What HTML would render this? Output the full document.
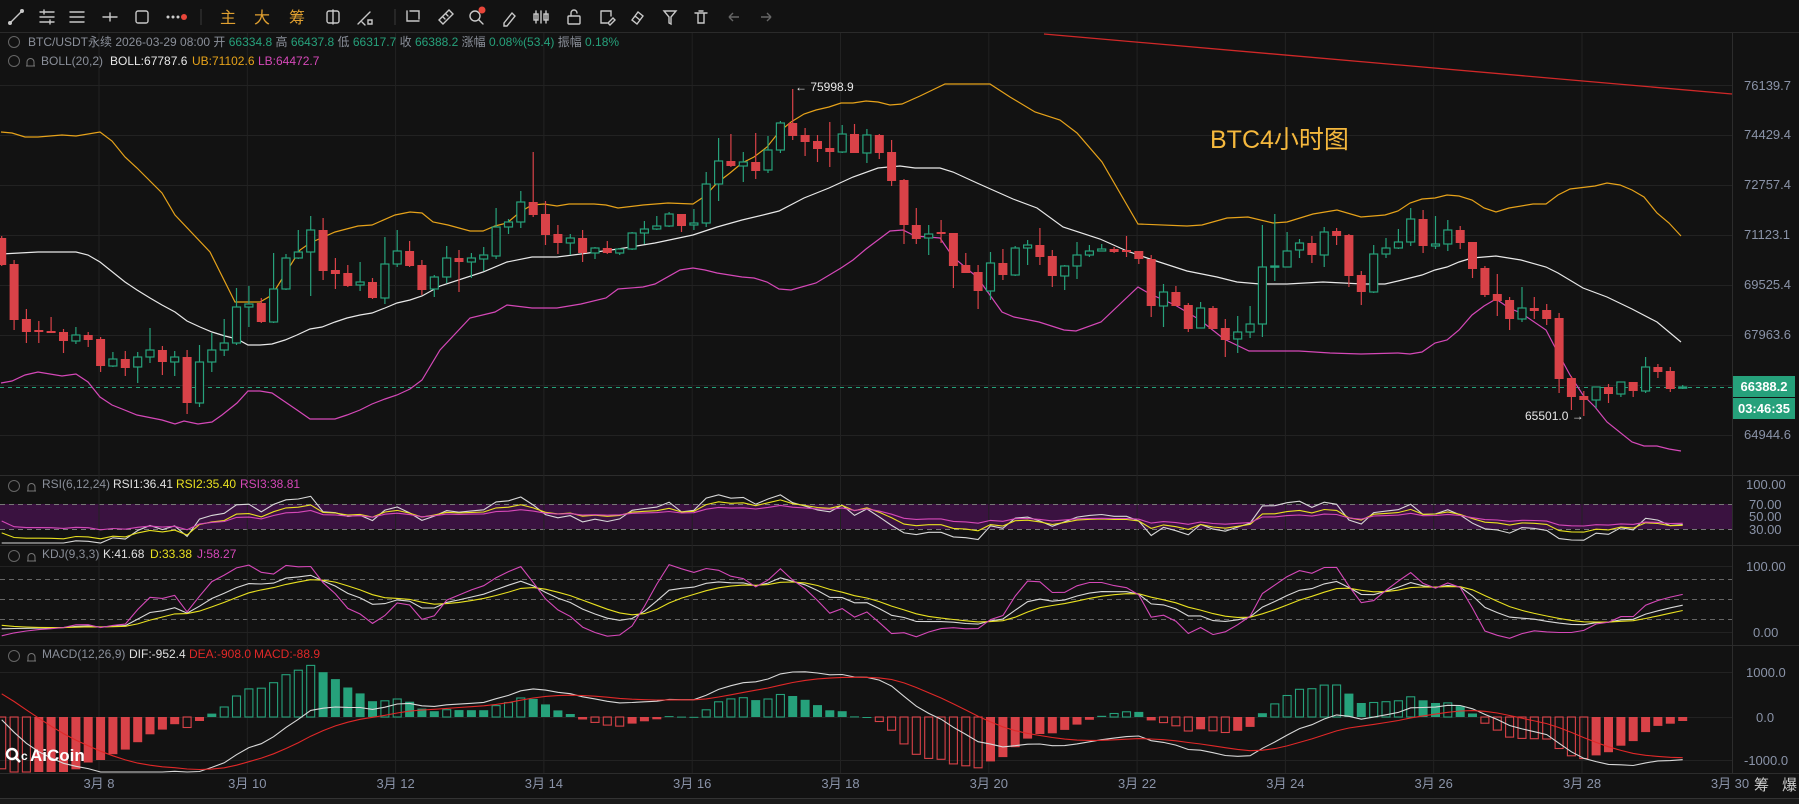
<!DOCTYPE html>
<html><head><meta charset="utf-8">
<style>
html,body{margin:0;padding:0;background:#121212;width:1799px;height:804px;overflow:hidden}
svg{position:absolute;left:0;top:0;font-family:"Liberation Sans","Noto Sans CJK SC",sans-serif}
</style></head>
<body>
<svg id="s" width="1799" height="804" viewBox="0 0 1799 804" xmlns="http://www.w3.org/2000/svg">
<rect width="1799" height="804" fill="#121212"/>
<g stroke="#c8c8c8" stroke-width="1.4" fill="none" stroke-linecap="round">
<line x1="10" y1="23" x2="22" y2="11"/><circle cx="10" cy="23" r="1.3" fill="#c8c8c8"/><circle cx="22" cy="11" r="1.3" fill="#c8c8c8"/>
<line x1="40" y1="12" x2="54" y2="12"/><line x1="40" y1="17" x2="54" y2="17"/><line x1="40" y1="22" x2="54" y2="22"/><line x1="44" y1="10" x2="44" y2="14"/><line x1="50" y1="20" x2="50" y2="24"/>
<line x1="70" y1="12" x2="84" y2="12"/><line x1="70" y1="17" x2="84" y2="17"/><line x1="70" y1="22" x2="84" y2="22"/>
<line x1="103" y1="17" x2="117" y2="17"/><line x1="110" y1="13" x2="110" y2="21"/>
<rect x="136" y="11" width="12" height="12" rx="2"/>
<line x1="333" y1="10" x2="333" y2="24"/><rect x="327" y="11" width="12" height="12" rx="2"/>
<path d="M358 24 L370 12 M362 22 l3 3 M368 20 h4 v4 h-4z"/>
<path d="M407 11 v10 h12 M410 11 h9 v8"/>
<path d="M439 20 l10 -10 l4 4 l-10 10z M443 17 l2 2 M446 14 l2 2"/>
<circle cx="475" cy="16" r="5"/><line x1="479" y1="20" x2="483" y2="24"/>
<path d="M504 23 l8 -10 l3 3 l-8 10 h-3z"/>
<path d="M536 11 v12 M541 11 v12 M546 11 v12"/><rect x="534" y="14" width="4" height="6"/><rect x="544" y="14" width="4" height="6"/>
<rect x="568" y="16" width="12" height="8" rx="1"/><path d="M571 16 v-3 a3 3 0 0 1 6 0"/>
<path d="M601 11 h10 v5 M601 11 v12 h6 M608 23 l5 -5 l2 2 l-5 5z"/>
<path d="M632 20 l6 -8 l5 4 l-6 8z M635 16 l5 4"/>
<path d="M664 11 h12 l-5 6 v7 l-2 -1 v-6z"/>
<path d="M695 13 h12 M698 13 v10 h6 v-10 M699 11 h4"/>
</g>
<g stroke="#666" stroke-width="1.4" fill="none"><path d="M729 17 h10 M729 17 l4 -4 M729 17 l4 4"/><path d="M771 17 h-10 M771 17 l-4 -4 M771 17 l-4 4"/></g>
<circle cx="168" cy="17" r="1.5" fill="#ccc"/><circle cx="173" cy="17" r="1.5" fill="#ccc"/><circle cx="178" cy="17" r="1.5" fill="#ccc"/><circle cx="184" cy="17" r="3" fill="#e8463a"/>
<circle cx="482" cy="10" r="3.5" fill="#e8463a"/>
<line x1="201" y1="9" x2="201" y2="25" stroke="#3a3a3a"/><line x1="395" y1="9" x2="395" y2="25" stroke="#3a3a3a"/>
<g fill="#e0a030" font-size="16"><text x="220" y="23">主</text><text x="254" y="23">大</text><text x="289" y="23">筹</text></g>
<line x1="0" y1="32.5" x2="1799" y2="32.5" stroke="#2a2a2a"/>
<g id="grid"></g>
<g id="plot"></g>
<g font-size="12" fill="#8a8f99">
<circle cx="14" cy="42" r="5.5" fill="none" stroke="#666"/>
<text x="28" y="46">BTC/USDT永续  2026-03-29 08:00 开 <tspan fill="#26a17b">66334.8</tspan> 高 <tspan fill="#26a17b">66437.8</tspan> 低 <tspan fill="#26a17b">66317.7</tspan> 收 <tspan fill="#26a17b">66388.2</tspan> 涨幅 <tspan fill="#26a17b">0.08%(53.4)</tspan> 振幅 <tspan fill="#26a17b">0.18%</tspan></text>
<circle cx="14" cy="61" r="5.5" fill="none" stroke="#666"/>
<path d="M26 66 h9 M27 66 v-4 a3.5 3.5 0 0 1 7 0 v4" fill="none" stroke="#777"/>
<text x="41" y="65">BOLL(20,2)</text><text x="110" y="65" fill="#e8e8e8">BOLL:67787.6</text><text x="192" y="65" fill="#e6a21a">UB:71102.6</text><text x="258" y="65" fill="#d548b8">LB:64472.7</text>
<circle cx="14" cy="486" r="5.5" fill="none" stroke="#666"/><path d="M27 491 h9 M28 491 v-4 a3.5 3.5 0 0 1 7 0 v4" fill="none" stroke="#777"/>
<text x="42" y="488">RSI(6,12,24)</text><text x="113" y="488" fill="#e0e0e0">RSI1:36.41</text><text x="176" y="488" fill="#e8e020">RSI2:35.40</text><text x="240" y="488" fill="#d548b8">RSI3:38.81</text>
<circle cx="14" cy="556" r="5.5" fill="none" stroke="#666"/><path d="M27 561 h9 M28 561 v-4 a3.5 3.5 0 0 1 7 0 v4" fill="none" stroke="#777"/>
<text x="42" y="558">KDJ(9,3,3)</text><text x="103" y="558" fill="#e0e0e0">K:41.68</text><text x="150" y="558" fill="#e8e020">D:33.38</text><text x="197" y="558" fill="#d548b8">J:58.27</text>
<circle cx="14" cy="656" r="5.5" fill="none" stroke="#666"/><path d="M27 661 h9 M28 661 v-4 a3.5 3.5 0 0 1 7 0 v4" fill="none" stroke="#777"/>
<text x="42" y="658">MACD(12,26,9)</text><text x="129" y="658" fill="#e0e0e0">DIF:-952.4</text><text x="189" y="658" fill="#e02828">DEA:-908.0</text><text x="254" y="658" fill="#e02828">MACD:-88.9</text>
</g>
<g font-size="13" fill="#8a93a8">
<text x="1744" y="90">76139.7</text><text x="1744" y="139">74429.4</text><text x="1744" y="189">72757.4</text><text x="1744" y="239">71123.1</text><text x="1744" y="289">69525.4</text><text x="1744" y="339">67963.6</text><text x="1744" y="439">64944.6</text>
<text x="1746" y="489">100.00</text><text x="1749" y="509">70.00</text><text x="1749" y="521">50.00</text><text x="1749" y="534">30.00</text>
<text x="1746" y="571">100.00</text><text x="1753" y="637">0.00</text>
<text x="1746" y="677">1000.0</text><text x="1756" y="722">0.0</text><text x="1744" y="765">-1000.0</text>
</g>
<rect x="1733" y="376" width="62" height="21" fill="#26a17b"/><text x="1764" y="391" text-anchor="middle" fill="#fff" font-size="13" font-weight="bold">66388.2</text>
<rect x="1733" y="398" width="62" height="21" fill="#26a17b"/><text x="1764" y="413" text-anchor="middle" fill="#fff" font-size="13" font-weight="bold">03:46:35</text>
<text x="1210" y="148" fill="#f5b83d" font-size="25">BTC4小时图</text>
<text x="795" y="91" fill="#e8e8e8" font-size="12">← 75998.9</text>
<text x="1525" y="420" fill="#e8e8e8" font-size="12">65501.0 →</text>
<g id="dates" font-size="13" fill="#8a93a8"></g>
<text x="1754" y="790" fill="#ccc" font-size="15">筹</text><text x="1782" y="790" fill="#ccc" font-size="15">爆</text>
<rect x="0" y="798" width="1799" height="6" fill="#1a1a1a"/><line x1="0" y1="798.5" x2="1799" y2="798.5" stroke="#333"/>
<g fill="#fff"><circle cx="12" cy="754" r="5" fill="none" stroke="#fff" stroke-width="2.5"/><path d="M16 758 l4 4" stroke="#fff" stroke-width="2.5"/><text x="21" y="760" font-size="12" font-weight="bold">c</text><text x="30" y="761" font-size="17" font-weight="bold">AiCoin</text></g>
</svg>
<script>
var C=[[238,265,236,266],[264,320,260,330],[319,332,309,343],[330,332,321,343],[331,333,317,333],[332,341,329,353],[341,335,327,344],[335,340,332,347],[339,366,337,372],[366,359,352,367],[359,368,351,376],[367,357,352,383],[357,350,328,363],[350,362,346,375],[362,357,351,376],[357,403,350,414],[403,362,345,407],[362,350,333,372],[350,343,319,356],[343,307,288,345],[307,304,286,327],[303,322,298,323],[322,289,253,323],[289,258,254,290],[258,252,230,259],[252,230,216,296],[230,271,218,280],[270,274,258,289],[273,286,265,287],[285,282,262,291],[282,298,278,299],[298,264,237,304],[264,251,230,267],[251,266,241,267],[265,290,260,295],[289,277,275,297],[277,258,246,283],[258,262,250,292],[262,258,253,278],[259,255,247,271],[256,227,208,259],[227,222,219,234],[222,202,191,228],[202,215,152,217],[214,235,201,245],[234,243,225,254],[243,238,234,255],[238,253,230,262],[253,248,247,259],[248,253,241,254],[253,249,248,255],[249,233,232,250],[233,229,221,244],[229,226,216,230],[226,214,212,227],[214,226,214,232],[225,223,209,230],[223,184,172,227],[184,161,138,201],[161,166,134,167],[166,162,152,182],[162,171,133,179],[170,150,136,173],[150,123,121,153],[123,136,89,140],[135,142,128,156],[141,149,135,162],[148,152,122,167],[152,134,125,153],[134,153,124,153],[153,135,129,163],[135,153,134,159],[152,181,140,186],[180,225,179,244],[225,239,208,244],[238,234,225,255],[232,234,220,243],[233,266,233,288],[265,273,253,273],[272,291,265,309],[291,263,252,300],[263,275,249,280],[275,248,246,276],[248,245,240,265],[245,257,228,265],[256,276,250,287],[276,266,265,290],[266,255,242,279],[255,251,245,257],[251,249,244,251],[249,252,247,253],[250,252,236,257],[251,259,251,264],[259,306,255,317],[306,292,284,327],[292,306,286,306],[305,329,303,332],[328,308,302,328],[308,329,306,329],[328,340,319,357],[339,332,316,353],[332,324,306,338],[324,267,225,337],[267,266,214,281],[267,251,232,267],[250,243,239,258],[243,255,236,263],[255,232,227,267],[231,236,228,245],[235,276,234,287],[275,292,271,305],[292,254,245,293],[254,248,238,258],[248,242,229,249],[242,219,208,246],[219,246,210,253],[246,244,216,249],[244,230,220,251],[230,243,226,249],[242,269,242,278],[268,295,266,297],[294,301,274,316],[300,319,297,330],[319,308,287,322],[308,311,297,319],[310,319,304,325],[318,379,313,393],[378,397,376,410],[396,400,391,416],[400,387,387,408],[387,394,384,403],[394,382,382,397],[382,391,382,397],[391,367,357,393],[367,372,364,378],[371,389,367,392],[388,387,385,389]];
var UP=[[1,132],[12,133],[25,137],[38,137],[62,135],[76,136],[100,132],[112,141],[125,157],[137,168],[162,193],[175,215],[210,252],[235,302],[260,302],[272,295],[300,250],[310,243],[335,232],[358,226],[372,225],[395,215],[410,212],[422,213],[433,222],[448,225],[470,231],[483,231],[495,226],[507,223],[520,212],[532,205],[544,204],[557,206],[569,204],[594,204],[606,205],[618,208],[643,205],[668,203],[693,204],[705,196],[717,183],[730,173],[742,163],[754,157],[767,147],[779,132],[791,122],[804,114],[816,110],[829,107],[841,103],[853,103],[866,101],[878,102],[890,105],[902,104],[920,96],[945,84],[990,84],[1010,97],[1035,112],[1060,120],[1077,133],[1102,162],[1138,224],[1187,226],[1202,225],[1227,218],[1248,217],[1273,223],[1287,222],[1313,214],[1337,210],[1361,217],[1385,215],[1398,211],[1410,203],[1422,199],[1435,198],[1447,195],[1459,196],[1472,200],[1484,208],[1496,212],[1509,208],[1533,204],[1546,204],[1558,195],[1570,189],[1595,186],[1607,183],[1620,185],[1632,190],[1644,197],[1657,213],[1669,223],[1681,236]];
var MID=[[1,254],[38,252],[76,252],[88,255],[100,262],[125,282],[137,290],[150,298],[162,305],[175,312],[187,321],[200,327],[212,332],[225,336],[237,339],[248,345],[260,345],[272,344],[285,340],[297,335],[310,329],[322,327],[335,322],[347,318],[360,315],[372,313],[385,308],[397,303],[410,300],[422,296],[440,286],[483,272],[507,262],[532,257],[557,257],[581,254],[618,249],[655,243],[693,235],[717,227],[742,220],[767,214],[779,211],[804,198],[829,188],[853,177],[878,168],[900,166],[915,168],[940,168],[953,172],[977,183],[1013,199],[1037,208],[1063,227],[1100,239],[1127,251],[1150,259],[1187,271],[1217,277],[1237,282],[1260,284],[1287,284],[1323,282],[1363,284],[1385,284],[1398,281],[1422,275],[1435,270],[1447,267],[1459,262],[1472,258],[1496,256],[1521,260],[1546,267],[1558,273],[1583,288],[1607,297],[1632,309],[1657,322],[1681,342]];
var LO=[[1,383],[12,381],[25,375],[38,372],[62,376],[76,374],[88,382],[100,397],[112,405],[137,415],[162,420],[175,424],[184,421],[198,424],[212,422],[222,415],[237,403],[248,391],[260,391],[272,393],[297,410],[310,419],[335,419],[347,415],[360,410],[372,404],[385,399],[397,395],[410,389],[422,380],[440,350],[470,318],[495,312],[507,305],[532,308],[557,308],[581,304],[606,298],[618,289],[643,287],[655,284],[680,270],[693,268],[705,270],[717,273],[742,277],[754,278],[767,282],[779,289],[791,290],[816,283],[841,268],[853,260],[866,249],[878,240],[890,231],[903,230],[915,236],[940,238],[953,257],[977,277],[1002,312],[1014,317],[1039,322],[1064,330],[1076,331],[1101,322],[1138,287],[1150,294],[1175,305],[1200,320],[1224,339],[1249,351],[1299,351],[1330,353],[1361,354],[1398,353],[1410,354],[1422,352],[1435,343],[1447,340],[1459,330],[1472,315],[1484,306],[1496,299],[1509,308],[1521,313],[1546,330],[1558,353],[1570,375],[1583,395],[1595,407],[1607,422],[1632,442],[1644,446],[1657,446],[1669,449],[1681,451]];
var G="#26a17b",R="#d94248";
function X(i){return 1.7+12.36*i;}
var g="",gr="";
var hl=[85,135,185,235,285,335,385,435];
hl.forEach(function(y){gr+='<line x1="0" y1="'+y+'.5" x2="1732" y2="'+y+'.5" stroke="#222"/>';});
[566,632,672,717,760].forEach(function(y){gr+='<line x1="0" y1="'+y+'.5" x2="1732" y2="'+y+'.5" stroke="#222"/>';});
gr+='<rect x="0" y="504" width="1732" height="25" fill="#3a1240"/>';
[504,529].forEach(function(y){gr+='<line x1="0" y1="'+y+'.5" x2="1732" y2="'+y+'.5" stroke="#777" stroke-dasharray="5,4"/>';});
[579,599,619].forEach(function(y){gr+='<line x1="0" y1="'+y+'.5" x2="1732" y2="'+y+'.5" stroke="#666" stroke-dasharray="5,4"/>';});
[475,545,645,773].forEach(function(y){gr+='<line x1="0" y1="'+y+'.5" x2="1799" y2="'+y+'.5" stroke="#2c2c2c"/>';});
var dts="";
for(var k=0;k<11;k++){var x=99+148.3*k;gr+='<line x1="'+x.toFixed(1)+'" y1="33" x2="'+x.toFixed(1)+'" y2="773" stroke="#222"/>';dts+='<text x="'+x.toFixed(1)+'" y="788" text-anchor="middle">3月 '+(8+2*k)+'</text>';}
dts+='<text x="1730" y="788" text-anchor="middle">3月 30</text>';
gr+='<line x1="1732.5" y1="33" x2="1732.5" y2="773" stroke="#2c2c2c"/>';
document.getElementById('grid').innerHTML=gr;
document.getElementById('dates').innerHTML=dts;
function pl(a,c,w){return '<polyline fill="none" stroke="'+c+'" stroke-width="'+(w||1.2)+'" points="'+a.map(function(p){return p[0].toFixed(1)+','+p[1].toFixed(1)}).join(' ')+'"/>';}
g+='<line x1="1044" y1="34" x2="1732" y2="94" stroke="#d02828" stroke-width="1.3"/>';
g+='<line x1="0" y1="387.5" x2="1732" y2="387.5" stroke="#26a17b" stroke-dasharray="4,4"/>';
g+=pl(UP,"#e6a21a")+pl(MID,"#e8e8e8")+pl(LO,"#d548b8");
C.forEach(function(c,i){var x=X(i),up=c[1]<=c[0];var col=up?G:R;var t=Math.min(c[0],c[1]),b=Math.max(c[0],c[1]);if(b-t<1.2)b=t+1.2;
g+='<line x1="'+x.toFixed(1)+'" y1="'+c[2]+'" x2="'+x.toFixed(1)+'" y2="'+t+'" stroke="'+col+'" stroke-width="1.2"/>';
g+='<line x1="'+x.toFixed(1)+'" y1="'+b+'" x2="'+x.toFixed(1)+'" y2="'+c[3]+'" stroke="'+col+'" stroke-width="1.2"/>';
if(up)g+='<rect x="'+(x-4).toFixed(1)+'" y="'+t+'" width="8" height="'+(b-t)+'" fill="#121212" stroke="'+col+'" stroke-width="1.2"/>';
else g+='<rect x="'+(x-4.5).toFixed(1)+'" y="'+t+'" width="9" height="'+(b-t)+'" fill="'+col+'"/>';});
function P(y){return 67963.6*Math.pow(1.02292,(334-y)/50);}
var H=[],py=420;
for(var k=0;k<50;k++){var ty=k<38?420-300*(k/37):120+118*((k-37)/12);var ny=ty+6*Math.sin(k*1.7);H.push([py,ny,Math.min(py,ny)-5,Math.max(py,ny)+5]);py=ny;}
var OFF=H.length;
var A=H.concat(C),n=A.length;
var cl=A.map(function(c){return P(c[1])}),hi=A.map(function(c){return P(c[2])}),lo=A.map(function(c){return P(c[3])});
function rsi(N){var u=0,d=0,out=[];for(var i=0;i<n;i++){var ch=i?cl[i]-cl[i-1]:0;u=(Math.max(ch,0)+(N-1)*u)/N;d=(Math.abs(ch)+(N-1)*d)/N;out.push(d?u/d*100:50);}return out;}
var r1=rsi(6),r2=rsi(12),r3=rsi(24);
var K=50,D=50,KK=[],DD=[],JJ=[];
for(var i=0;i<n;i++){var hh=-1e9,ll=1e9;for(var j=Math.max(0,i-8);j<=i;j++){hh=Math.max(hh,hi[j]);ll=Math.min(ll,lo[j]);}var rsv=hh>ll?(cl[i]-ll)/(hh-ll)*100:50;K=(2*K+rsv)/3;D=(2*D+K)/3;KK.push(K);DD.push(D);JJ.push(3*K-2*D);}
var e12=cl[0],e26=cl[0],dea=0,DIF=[],DEA=[],HS=[];
for(var i=0;i<n;i++){e12=e12+(cl[i]-e12)*2/13;e26=e26+(cl[i]-e26)*2/27;var df=e12-e26;dea=dea+(df-dea)*2/10;DIF.push(df);DEA.push(dea);HS.push(2*(df-dea));}
function line(arr,f,col){var pts=[];for(var i=OFF;i<n;i++){pts.push([X(i-OFF),f(arr[i])]);}return pl(pts,col,1.1);}
var fr=function(v){return Math.max(477,Math.min(543,516.5-(v-50)*0.625));};
var fk=function(v){return Math.max(547,Math.min(643,632-v*0.66));};
var fm=function(v){return Math.max(647,Math.min(772,717-v*0.045));};
g+=line(r1,fr,"#d8d8d8")+line(r2,fr,"#e8e020")+line(r3,fr,"#d548b8");
g+=line(KK,fk,"#d8d8d8")+line(DD,fk,"#e8e020")+line(JJ,fk,"#d548b8");
for(var i=OFF;i<n;i++){var h=HS[i],x=X(i-OFF),y=fm(h),grow=Math.abs(h)>Math.abs(HS[i-1]);var col=h>=0?G:R;var t=Math.min(y,717),b=Math.max(y,717);if(b-t<1)b=t+1;
if(grow)g+='<rect x="'+(x-4).toFixed(1)+'" y="'+t.toFixed(1)+'" width="8" height="'+(b-t).toFixed(1)+'" fill="none" stroke="'+col+'" stroke-width="1.1"/>';
else g+='<rect x="'+(x-4.5).toFixed(1)+'" y="'+t.toFixed(1)+'" width="9" height="'+(b-t).toFixed(1)+'" fill="'+col+'"/>';}
g+=line(DIF,fm,"#d8d8d8")+line(DEA,fm,"#e02828");
document.getElementById('plot').innerHTML=g;
</script>
</body></html>
